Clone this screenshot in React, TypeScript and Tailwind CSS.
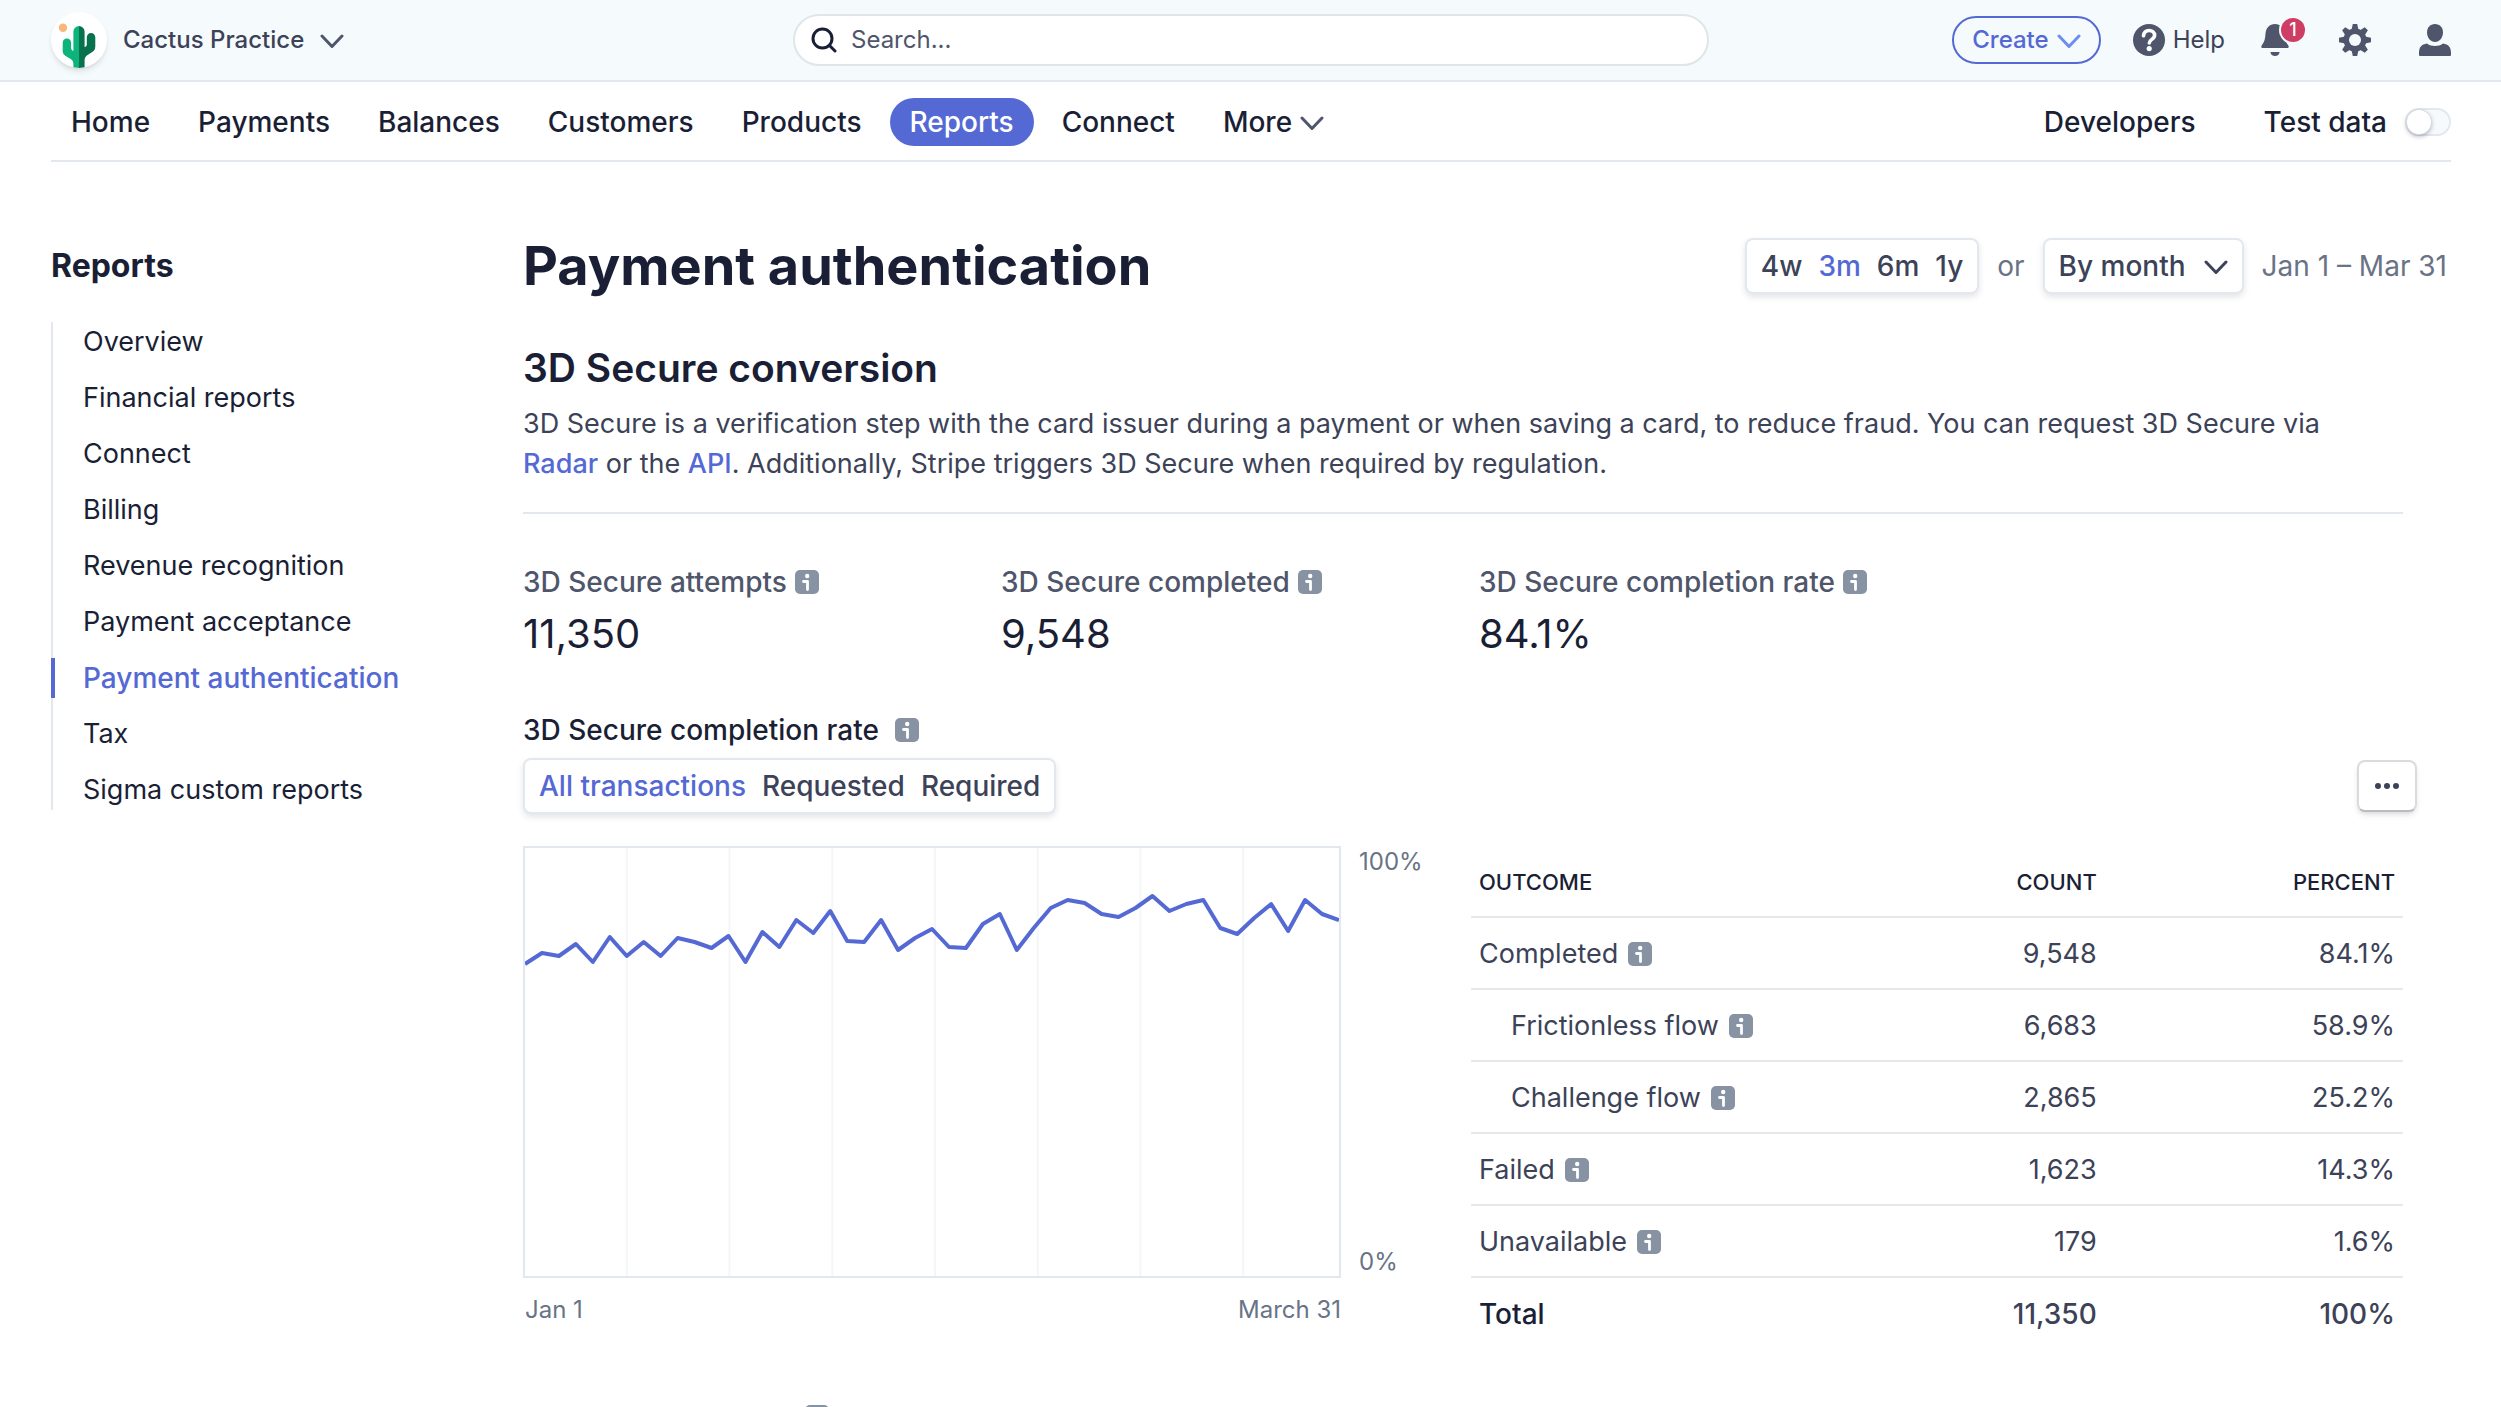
import { useId, useState } from "react";
import clsx from "clsx";

const navItems = ["Home", "Payments", "Balances", "Customers", "Products", "Reports", "Connect"];

const sideItems = [
  "Overview",
  "Financial reports",
  "Connect",
  "Billing",
  "Revenue recognition",
  "Payment acceptance",
  "Payment authentication",
  "Tax",
  "Sigma custom reports",
];

const stats = [
  { label: "3D Secure attempts", value: "11,350" },
  { label: "3D Secure completed", value: "9,548" },
  { label: "3D Secure completion rate", value: "84.1%" },
];

const outcomes = [
  { name: "Completed", count: "9,548", percent: "84.1%", nested: false },
  { name: "Frictionless flow", count: "6,683", percent: "58.9%", nested: true },
  { name: "Challenge flow", count: "2,865", percent: "25.2%", nested: true },
  { name: "Failed", count: "1,623", percent: "14.3%", nested: false },
  { name: "Unavailable", count: "179", percent: "1.6%", nested: false },
];

// distance from the top of the plot, one value per sample
const samples = [
  116, 105, 108, 96, 114, 89, 108, 94, 108, 90, 94, 100, 88, 114, 84, 99, 72, 85, 63, 93, 94, 72, 102, 90, 81, 99,
  100, 76, 66, 102, 80, 60, 52, 55, 66, 69, 60, 48, 63, 56, 52, 80, 86, 70, 56, 83, 52, 66, 72,
];

const CHART_W = 816;
const CHART_H = 428;

function Chevron({ className }: { className?: string }) {
  return (
    <svg viewBox="0 0 24 24" className={clsx("w-6 h-6 shrink-0", className)} fill="none" stroke="currentColor" strokeWidth="3" strokeLinecap="round" strokeLinejoin="round" aria-hidden="true">
      <path d="M2 8 12 18.5 22 8" />
    </svg>
  );
}

function Info() {
  return (
    <svg viewBox="0 0 24 24" className="w-6 h-6 shrink-0" role="img" aria-label="More information">
      <rect width="24" height="24" rx="5" fill="#8792a2" />
      <circle cx="12.2" cy="6" r="2.2" fill="#fff" />
      <path d="M8.500 11.500h4v8" fill="none" stroke="#fff" strokeWidth="2.800" strokeLinecap="round" strokeLinejoin="round" />
    </svg>
  );
}

function CactusLogo() {
  return (
    <span className="w-14 h-14 rounded-full bg-white shadow-md overflow-hidden shrink-0">
      <svg viewBox="0 0 56 56" className="w-14 h-14" aria-hidden="true">
        <circle cx="12" cy="15.8" r="4.2" fill="#f5b87a" />
        <path d="M28 14a5.6 5.6 0 0 0-5.6 5.6V39c-1.4-.6-2.3-1.6-2.3-3.2v-5a4.2 4.2 0 0 0-8.4 0v8.7c0 6.200 10.700 5.500 10.700 12V56H28z" fill="#0cb37a" />
        <path d="M28 14a5.600 5.600 0 0 1 5.600 5.600V35c1.300-.5 2.200-1.200 2.200-2.600v-7.200a4.200 4.200 0 0 1 8.500 0v9.500c0 7.300-10.700 6.300-10.700 13.300v8H28z" fill="#08724f" />
      </svg>
    </span>
  );
}

function Segmented({ options, initial, label }: { options: string[]; initial: string; label: string }) {
  const [value, setValue] = useState(initial);
  return (
    <div role="group" aria-label={label} className="flex w-fit h-14 items-center gap-4 rounded-lg border-2 border-[#e3e8ee] bg-white px-3.5 shadow-[0_3px_6px_rgba(60,66,87,0.14)]">
      {options.map((o) => (
        <button
          key={o}
          type="button"
          aria-pressed={value === o}
          onClick={() => setValue(o)}
          className={clsx("font-medium", value === o ? "text-[#5469d4]" : "text-[#3c4257]")}
        >
          {o}
        </button>
      ))}
    </div>
  );
}

function TopBar() {
  return (
    <header className="grid h-[82px] grid-cols-[1fr_916px_1fr] items-center border-b-2 border-[#e3e8ee] bg-[#f5fafd] pl-[51px] pr-[50px] text-2xl text-[#3c4257]">
      <button type="button" className="flex w-fit items-center gap-4 font-medium">
        <CactusLogo />
        Cactus Practice
        <Chevron className="text-[#4f566b]" />
      </button>

      <div className="flex h-[52px] items-center gap-3.5 rounded-full border-2 border-[#e0e5ea] bg-white px-4">
        <svg viewBox="0 0 26 26" className="w-[26px] h-[26px] shrink-0" fill="none" stroke="#1a1f36" strokeWidth="3" strokeLinecap="round" aria-hidden="true">
          <circle cx="11.500" cy="11.500" r="9.500" />
          <path d="m18.500 18.500 5.500 5.500" />
        </svg>
        <input type="search" aria-label="Search" placeholder="Search..." className="w-full bg-transparent outline-none placeholder:text-[#4f566b]" />
      </div>

      <div className="flex items-center justify-end">
        <button type="button" className="flex h-12 items-center gap-2 rounded-full border-2 border-[#5469d4] px-[18px] font-medium text-[#5469d4]">
          Create
          <Chevron className="text-[#6c8eef]" />
        </button>
        <button type="button" className="ml-8 flex items-center gap-2">
          <svg viewBox="0 0 32 32" className="w-8 h-8" aria-hidden="true">
            <circle cx="16" cy="16" r="16" fill="#4f566b" />
            <path d="M10.500 11.800c.4-3.300 2.600-5.300 5.600-5.300 3.200 0 5.500 2 5.500 4.800 0 4.200-5.300 3.900-5.300 7.700" fill="none" stroke="#fff" strokeWidth="3.600" strokeLinecap="round" />
            <circle cx="16.200" cy="24.600" r="2.600" fill="#fff" />
          </svg>
          Help
        </button>
        <button type="button" aria-label="Notifications" className="relative ml-9 w-8 h-8">
          <svg viewBox="0 0 32 32" className="w-8 h-8" fill="#4f566b" aria-hidden="true">
            <path d="M14 0C8.500 0 5 4 4.500 9.500 4 16 3.500 17.500.8 21.300c-1 1.400-.5 2.700 1 2.700h24.400c1.500 0 2-1.300 1-2.700-2.700-3.800-3.200-5.300-3.700-11.800C23 4 19.500 0 14 0z" />
            <path d="M9.500 28h9c0 2.400-2 4-4.500 4s-4.500-1.600-4.500-4z" />
          </svg>
          <span className="absolute -top-1.5 left-5 flex w-6 h-6 items-center justify-center rounded-full bg-[#cd3d64] text-lg font-medium text-white ring-2 ring-[#f5fafd]">1</span>
        </button>
        <button type="button" aria-label="Settings" className="ml-[46px] w-8 h-8">
          <svg viewBox="0 0 32 32" className="w-8 h-8" aria-hidden="true">
            <g fill="#4f566b">
              {[0, 45, 90, 135].map((a) => (
                <path key={a} d="M13.800 0h4.400l1.300 6v20l-1.300 6h-4.400l-1.300-6V6z" transform={`rotate(${a} 16 16)`} />
              ))}
              <circle cx="16" cy="16" r="11.500" />
            </g>
            <circle cx="16" cy="16" r="6" fill="#f5fafd" />
          </svg>
        </button>
        <button type="button" aria-label="Account" className="ml-12 w-8 h-8">
          <svg viewBox="0 0 32 32" className="w-8 h-8" fill="#4f566b" aria-hidden="true">
            <path d="M16 0c4.800 0 8 3.500 8 8.500S20.500 18 16 18s-8-4.500-8-9.500S11.200 0 16 0z" />
            <path d="M0 29c0-6 2.500-8.500 8-9.500 2.400 1.800 5 2.500 8 2.500s5.600-.7 8-2.500c5.500 1 8 3.500 8 9.500v1.500c0 1-.5 1.500-1.500 1.500h-29C.5 32 0 31.500 0 30.500z" />
          </svg>
        </button>
      </div>
    </header>
  );
}

function MainNav() {
  return (
    <nav className="ml-[51px] mr-[50px] flex h-20 items-center justify-between border-b-2 border-[#e3e8ee] pt-0.5 font-medium">
      <div className="flex items-center gap-2">
        {navItems.map((item) => (
          <a
            key={item}
            href="#"
            aria-current={item === "Reports" ? "page" : undefined}
            className={clsx("flex h-12 items-center rounded-full px-5", item === "Reports" && "bg-[#5469d4] text-white")}
          >
            {item}
          </a>
        ))}
        <button type="button" className="flex h-12 items-center gap-2 px-5">
          More
          <Chevron className="text-[#4f566b]" />
        </button>
      </div>
      <div className="flex items-center gap-[68px]">
        <a href="#">Developers</a>
        <label className="relative flex items-center gap-[18px]">
          Test data
          <input type="checkbox" className="peer absolute inset-y-0 right-0 w-11 opacity-0" />
          <span className="flex h-7 w-[46px] items-center rounded-full border-2 border-[#e3e8ee] bg-[#f7fafc] peer-checked:justify-end">
            <span className="w-6 h-6 rounded-full bg-white shadow-[0_2px_5px_rgba(26,31,54,0.4)] ring-1 ring-[#d5dbe1]" />
          </span>
        </label>
      </div>
    </nav>
  );
}

function Sidebar() {
  return (
    <aside className="w-[472px] shrink-0">
      <h2 className="flex h-14 items-center text-[32px] font-bold">Reports</h2>
      <ul className="mt-7 flex flex-col gap-4 border-l-2 border-[#e3e8ee] text-[27px]">
        {sideItems.map((item) => {
          const active = item === "Payment authentication";
          return (
            <li key={item}>
              <a href="#" className={clsx("-ml-0.5 block border-l-4 pl-7 leading-10", active ? "border-[#5469d4] text-[28px] font-medium text-[#5469d4]" : "border-transparent")}>
                {item}
              </a>
            </li>
          );
        })}
      </ul>
    </aside>
  );
}

function Chart() {
  const step = CHART_W / (samples.length - 1);
  const points = samples.map((y, i) => `${i * step},${y}`).join(" ");
  return (
    <div className="text-2xl leading-8 text-[#697386]">
      <div className="flex gap-[18px]">
        <div className="h-[432px] flex-1 border-2 border-[#e3e8ee]">
          <svg viewBox={`0 0 ${CHART_W} ${CHART_H}`} preserveAspectRatio="none" className="w-full h-full" role="img" aria-label="3D Secure completion rate over time">
            {[1, 2, 3, 4, 5, 6, 7].map((n) => (
              <line key={n} x1={n * 103 - 1} x2={n * 103 - 1} y1="0" y2={CHART_H} stroke="#f4f6f8" strokeWidth="2" />
            ))}
            <polyline points={points} fill="none" stroke="#5469d4" strokeWidth="4" strokeLinejoin="round" />
          </svg>
        </div>
        <div className="flex w-[88px] flex-col justify-between">
          <span>100%</span>
          <span>0%</span>
        </div>
      </div>
      <div className="mt-4 mr-[106px] flex justify-between pl-0.5">
        <span>Jan 1</span>
        <span>March 31</span>
      </div>
    </div>
  );
}

function OutcomeTable() {
  return (
    <div className="-ml-2">
      <table className="w-full table-fixed text-[27px] text-[#3c4257]">
        <thead>
          <tr className="h-[71px] border-b-2 border-[#e6e8ea] text-[22px] text-[#1a1f36]">
            <th className="px-2 pt-0.5 text-left font-medium">OUTCOME</th>
            <th className="w-[32%] px-2 pt-0.5 text-right font-medium">COUNT</th>
            <th className="w-[32%] px-2 pt-0.5 text-right font-medium">PERCENT</th>
          </tr>
        </thead>
        <tbody>
          {outcomes.map((row) => (
            <tr key={row.name} className="h-[72px] border-b-2 border-[#e6e8ea]">
              <td className={clsx("pr-2 pt-0.5", row.nested ? "pl-10" : "pl-2")}>
                <span className="flex items-center gap-2.5">
                  {row.name}
                  <Info />
                </span>
              </td>
              <td className="px-2 pt-0.5 text-right">{row.count}</td>
              <td className="px-2 pt-0.5 text-right">{row.percent}</td>
            </tr>
          ))}
          <tr className="h-[72px] text-[28px] font-medium">
            <td className="px-2 text-[#1a1f36]">Total</td>
            <td className="px-2 text-right">11,350</td>
            <td className="px-2 text-right">100%</td>
          </tr>
        </tbody>
      </table>
    </div>
  );
}

export default function App() {
  const rangeId = useId();

  return (
    <div className="h-screen overflow-hidden bg-white font-['Inter',sans-serif] text-[28px] leading-10 text-[#1a1f36]">
      <TopBar />
      <MainNav />

      <div className="flex pl-[51px] pr-[50px] pt-[76px]">
        <Sidebar />

        <main className="min-w-0 flex-1">
          {/* Title + date range */}
          <div className="flex h-14 items-center justify-between">
            <h1 className="text-[54px] font-bold">Payment authentication</h1>
            <div className="flex items-center gap-[18px] pr-1 text-[#697386]">
              <Segmented options={["4w", "3m", "6m", "1y"]} initial="3m" label="Date range" />
              <label htmlFor={rangeId}>or</label>
              <div className="relative">
                <select id={rangeId} defaultValue="By month" className="h-14 appearance-none rounded-lg border-2 border-[#e3e8ee] bg-white pl-3.5 pr-14 font-medium text-[#3c4257] shadow-[0_3px_6px_rgba(60,66,87,0.14)]">
                  <option>By day</option>
                  <option>By week</option>
                  <option>By month</option>
                </select>
                <Chevron className="pointer-events-none absolute right-4 top-4 text-[#3c4257]" />
              </div>
              <span>Jan 1 – Mar 31</span>
            </div>
          </div>

          <div className="pr-12">
            <section className="mt-[46px] border-b-2 border-[#e3e8ee] pb-7">
              <h2 className="text-[39px] leading-[56px] font-semibold">3D Secure conversion</h2>
              <p className="mt-2 pr-12 text-[27px] text-[#3c4257]">
                3D Secure is a verification step with the card issuer during a payment or when saving a card, to reduce fraud. You can request 3D Secure via{" "}
                <a href="#" className="font-medium text-[#5469d4]">Radar</a> or the{" "}
                <a href="#" className="font-medium text-[#5469d4]">API</a>. Additionally, Stripe triggers 3D Secure when required by regulation.
              </p>
            </section>

            {/* Headline numbers */}
            <section className="mt-12 grid grid-cols-4 gap-8">
              {stats.map((s) => (
                <div key={s.label}>
                  <div className="flex items-center gap-2 whitespace-nowrap font-medium text-[#4f566b]">
                    {s.label}
                    <Info />
                  </div>
                  <div className="mt-1 text-[40px] leading-[56px]">{s.value}</div>
                </div>
              ))}
            </section>

            <section className="mt-12">
              <h3 className="flex items-center gap-4 font-medium">
                3D Secure completion rate
                <Info />
              </h3>
              <div className="mt-2 -mr-3.5 flex items-center justify-between">
                <Segmented options={["All transactions", "Requested", "Required"]} initial="All transactions" label="Transactions" />
                <button type="button" aria-label="More options" className="flex h-[52px] w-[60px] items-center justify-center rounded-lg border-2 border-[#d8dcdf] border-b-[#b9bdc1] bg-white shadow-md">
                  <svg viewBox="0 0 24 8" className="w-6 h-2" fill="#3c4257" aria-hidden="true">
                    <circle cx="3" cy="4" r="3" />
                    <circle cx="12" cy="4" r="3" />
                    <circle cx="21" cy="4" r="3" />
                  </svg>
                </button>
              </div>
              <div className="mt-8 grid grid-cols-2 gap-8">
                <Chart />
                <OutcomeTable />
              </div>
            </section>

            <section className="mt-14 pl-[282px]">
              <Info />
            </section>
          </div>
        </main>
      </div>
    </div>
  );
}
